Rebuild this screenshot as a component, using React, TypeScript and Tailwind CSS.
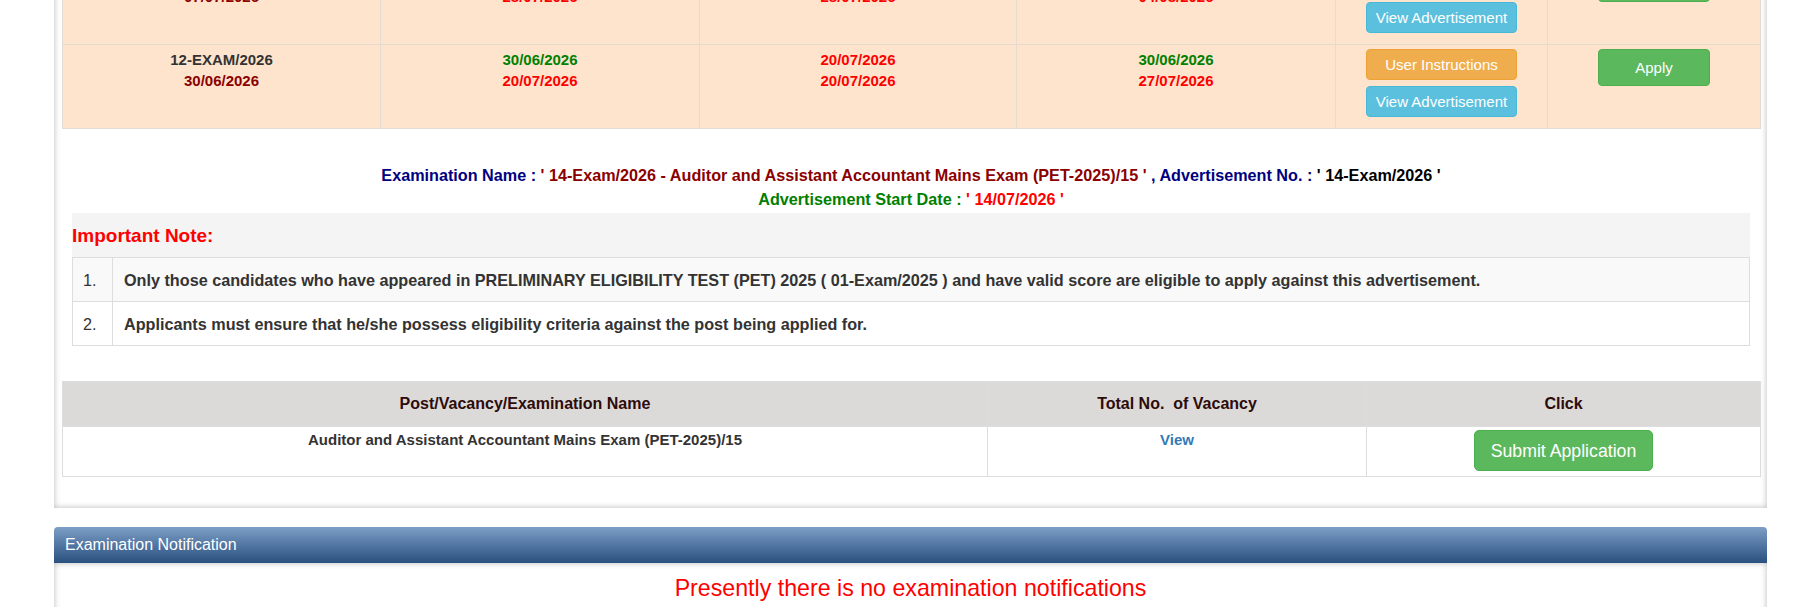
import React from "react";

type Row = {
  code: string;
  date: string;
  open: [string, string];
  close: [string, string];
  fee: [string, string];
};

const rows: Row[] = [
  {
    code: "11-EXAM/2026",
    date: "07/07/2026",
    open: ["07/07/2026", "28/07/2026"],
    close: ["28/07/2026", "28/07/2026"],
    fee: ["07/07/2026", "04/08/2026"],
  },
  {
    code: "12-EXAM/2026",
    date: "30/06/2026",
    open: ["30/06/2026", "20/07/2026"],
    close: ["20/07/2026", "20/07/2026"],
    fee: ["30/06/2026", "27/07/2026"],
  },
];

function ScheduleTable() {
  return (
    <table className="w-[1698px] table-fixed border-collapse text-[15px] font-bold leading-[21px]">
      <colgroup>
        <col className="w-[318px]" />
        <col className="w-[319px]" />
        <col className="w-[317px]" />
        <col className="w-[319px]" />
        <col className="w-[212px]" />
        <col className="w-[213px]" />
      </colgroup>
      <tbody>
        {rows.map((r) => (
          <tr key={r.code} className="bg-[#fee4cc]">
            <td className="h-[84px] border border-[#e3dcd3] px-2 pt-[4px] text-center align-top">
              <div className="text-[#333]">{r.code}</div>
              <div className="text-[#8b0000]">{r.date}</div>
            </td>
            <td className="border border-[#e3dcd3] px-2 pt-[4px] text-center align-top">
              <div className="text-[#008000]">{r.open[0]}</div>
              <div className="text-[#ff0000]">{r.open[1]}</div>
            </td>
            <td className="border border-[#e3dcd3] px-2 pt-[4px] text-center align-top">
              <div className="text-[#ff0000]">{r.close[0]}</div>
              <div className="text-[#ff0000]">{r.close[1]}</div>
            </td>
            <td className="border border-[#e3dcd3] px-2 pt-[4px] text-center align-top">
              <div className="text-[#008000]">{r.fee[0]}</div>
              <div className="text-[#ff0000]">{r.fee[1]}</div>
            </td>
            <td className="border border-[#e3dcd3] px-2 pt-[4px] align-top">
              <div className="flex flex-col items-center gap-[6px] font-normal">
                <button className="h-[31px] w-[151px] rounded-[4px] border border-[#eea236] bg-[#f0ad4e] text-[15px] text-white">
                  User Instructions
                </button>
                <button className="h-[31px] w-[151px] rounded-[4px] border border-[#46b8da] bg-[#5bc0de] text-[15px] text-white">
                  View Advertisement
                </button>
              </div>
            </td>
            <td className="border border-[#e3dcd3] px-2 pt-[4px] align-top">
              <div className="flex justify-center font-normal">
                <button className="h-[37px] w-[112px] rounded-[4px] border border-[#4cae4c] bg-[#5cb85c] text-[15px] text-white">
                  Apply
                </button>
              </div>
            </td>
          </tr>
        ))}
      </tbody>
    </table>
  );
}

function ExamSummary() {
  return (
    <div className="mt-[34px] text-center text-[16.2px] font-bold leading-[24px]">
      <div>
        <span className="text-[#000080]">Examination Name : </span>
        <span className="text-[#8b0000]">
          ' 14-Exam/2026 - Auditor and Assistant Accountant Mains Exam (PET-2025)/15 '
        </span>
        <span className="text-[#000080]"> , Advertisement No. : </span>
        <span className="text-black">' 14-Exam/2026 '</span>
      </div>
      <div>
        <span className="text-[#008000]">Advertisement Start Date : </span>
        <span className="text-[#ff0000]">' 14/07/2026 '</span>
      </div>
    </div>
  );
}

const notes = [
  "Only those candidates who have appeared in PRELIMINARY ELIGIBILITY TEST (PET) 2025 ( 01-Exam/2025 ) and have valid score are eligible to apply against this advertisement.",
  "Applicants must ensure that he/she possess eligibility criteria against the post being applied for.",
];

function ImportantNote() {
  return (
    <div className="mx-[10px] mt-[2px]">
      <div className="bg-[#f4f4f4] pt-[12px] pb-[10px] text-[19px] font-bold leading-[22px] text-[#ff0000]">
        Important Note:
      </div>
      <table className="w-full table-fixed border-collapse text-[16.2px] leading-[20px] text-[#333]">
        <colgroup>
          <col className="w-[40px]" />
          <col />
        </colgroup>
        <tbody>
          {notes.map((n, i) => (
            <tr key={i} className={i % 2 === 0 ? "bg-[#f9f9f9]" : "bg-white"}>
              <td className="h-[44px] border border-[#ddd] pl-[10px] align-middle">{i + 1}.</td>
              <td className="border border-[#ddd] pl-[11px] align-middle font-bold">{n}</td>
            </tr>
          ))}
        </tbody>
      </table>
    </div>
  );
}

function VacancyTable() {
  return (
    <table className="mt-[35px] w-[1698px] table-fixed border-collapse text-center">
      <colgroup>
        <col className="w-[925px]" />
        <col className="w-[379px]" />
        <col className="w-[394px]" />
      </colgroup>
      <thead>
        <tr className="bg-[#dcdad8] text-[16px] font-bold leading-[22px] text-[#2d0b0b]">
          <th className="h-[45px] border border-[#ddd] align-middle">Post/Vacancy/Examination Name</th>
          <th className="border border-[#ddd] align-middle">Total No.&nbsp; of Vacancy</th>
          <th className="border border-[#ddd] align-middle">Click</th>
        </tr>
      </thead>
      <tbody>
        <tr className="bg-white text-[15px] font-bold leading-[20px]">
          <td className="h-[50px] border border-[#ddd] pt-[3px] align-top text-[#333]">
            Auditor and Assistant Accountant Mains Exam (PET-2025)/15
          </td>
          <td className="border border-[#ddd] pt-[3px] align-top">
            <a className="text-[#337ab7]">View</a>
          </td>
          <td className="border border-[#ddd] pt-[3px] align-top">
            <button className="h-[41px] rounded-[5px] border border-[#4cae4c] bg-[#5cb85c] px-[16px] text-[17.7px] font-normal text-white">
              Submit Application
            </button>
          </td>
        </tr>
      </tbody>
    </table>
  );
}

export default function App() {
  return (
    <div className="min-h-screen overflow-hidden bg-white font-['Liberation_Sans',Arial,sans-serif]">
      <div className="-mt-[40px] ml-[54px] w-[1713px]">
        <section className="bg-white pb-[31px] pl-[8px] pr-[7px] shadow-[inset_0_0_6px_rgba(0,0,0,0.28)]">
          <ScheduleTable />
          <ExamSummary />
          <ImportantNote />
          <VacancyTable />
        </section>

        <div className="mt-[19px] flex h-[36px] items-center rounded-t-[4px] bg-gradient-to-b from-[#7d9fc7] to-[#29507f] px-[11px] text-[16px] text-white">
          Examination Notification
        </div>
        <section className="h-[80px] bg-white pt-[11px] text-center text-[23.2px] leading-[28px] text-[#ff0000] shadow-[inset_0_0_6px_rgba(0,0,0,0.28)]">
          Presently there is no examination notifications
        </section>
      </div>
    </div>
  );
}
